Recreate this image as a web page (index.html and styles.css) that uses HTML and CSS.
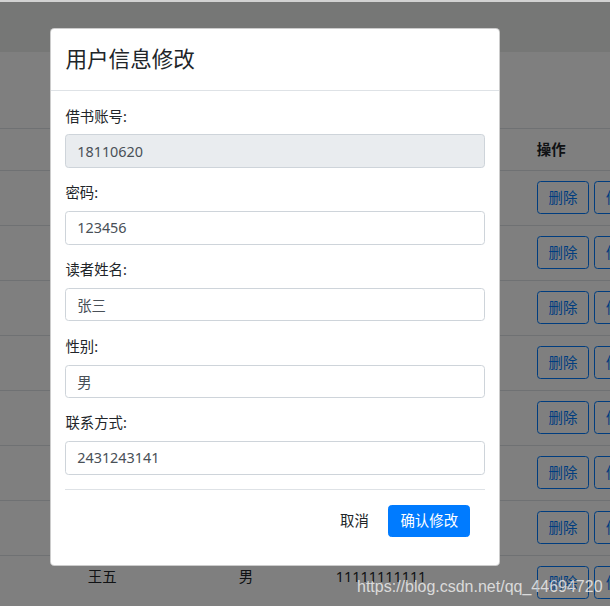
FILE: index.html
```html
<!DOCTYPE html>
<html lang="zh-CN">
<head>
<meta charset="utf-8">
<title>用户信息修改</title>
<link rel="stylesheet" href="styles.css">
</head>
<body>
<div class="chrome-strip"></div>
<nav class="navbar"></nav>
<main class="page">
  <table class="table">
    <colgroup>
      <col class="c-acc"><col class="c-name"><col class="c-sex"><col class="c-tel"><col class="c-op">
    </colgroup>
    <thead>
      <tr><th>借书账号</th><th>读者姓名</th><th>性别</th><th>联系方式</th><th>操作</th></tr>
    </thead>
    <tbody>
      <tr><td>18110620</td><td>张三</td><td>男</td><td>2431243141</td><td><button class="btn-o">删除</button><button class="btn-o">修改</button></td></tr>
      <tr><td>18110621</td><td>李四</td><td>女</td><td>13800000000</td><td><button class="btn-o">删除</button><button class="btn-o">修改</button></td></tr>
      <tr><td>18110622</td><td>赵六</td><td>男</td><td>13900000000</td><td><button class="btn-o">删除</button><button class="btn-o">修改</button></td></tr>
      <tr><td>18110623</td><td>孙七</td><td>女</td><td>13700000000</td><td><button class="btn-o">删除</button><button class="btn-o">修改</button></td></tr>
      <tr><td>18110624</td><td>周八</td><td>男</td><td>13600000000</td><td><button class="btn-o">删除</button><button class="btn-o">修改</button></td></tr>
      <tr><td>18110625</td><td>吴九</td><td>女</td><td>13500000000</td><td><button class="btn-o">删除</button><button class="btn-o">修改</button></td></tr>
      <tr><td>18110626</td><td>郑十</td><td>男</td><td>13400000000</td><td><button class="btn-o">删除</button><button class="btn-o">修改</button></td></tr>
      <tr><td>18110627</td><td>王五</td><td>男</td><td>11111111111</td><td><button class="btn-o">删除</button><button class="btn-o">修改</button></td></tr>
    </tbody>
  </table>
</main>

<div class="backdrop">
  <div class="modal">
    <div class="modal-header">
      <h4 class="modal-title">用户信息修改</h4>
    </div>
    <form class="modal-body">
      <div class="group">
        <label class="label">借书账号:</label>
        <input class="input" type="text" value="18110620" disabled>
      </div>
      <div class="group">
        <label class="label">密码:</label>
        <input class="input" type="text" value="123456">
      </div>
      <div class="group">
        <label class="label">读者姓名:</label>
        <input class="input" type="text" value="张三">
      </div>
      <div class="group">
        <label class="label">性别:</label>
        <input class="input" type="text" value="男">
      </div>
      <div class="group">
        <label class="label">联系方式:</label>
        <input class="input" type="text" value="2431243141">
      </div>
      <div class="footer">
        <button type="button" class="btn btn-cancel">取消</button>
        <button type="button" class="btn btn-primary">确认修改</button>
      </div>
    </form>
  </div>
</div>
<div class="watermark">https://blog.csdn.net/qq_44694720</div>
</body>
</html>
```
FILE: styles.css
```css
* { box-sizing: border-box; }
html, body {
  margin: 0;
  padding: 0;
  width: 610px;
  height: 606px;
  overflow: hidden;
}
body {
  font-family: "Noto Sans", "Noto Sans CJK SC", sans-serif;
  font-size: 14.4px;
  line-height: 21.6px;
  color: #212529;
  background: #ffffff;
  position: relative;
}
.chrome-strip {
  height: 2px;
  background: #d2d2d2;
}
.navbar {
  height: 50px;
  background: #eceeed;
}
.page {
  padding-top: 76px;
}
.table {
  border-collapse: collapse;
  table-layout: fixed;
  width: 805px;
  margin-left: -150px;
}
.c-acc { width: 227px; }
.c-name { width: 151px; }
.c-sex { width: 97px; }
.c-tel { width: 201px; }
.c-op { width: 129px; }
.table th {
  text-align: left;
  font-weight: 700;
  border-top: 1px solid #dee2e6;
  padding: 10px 10.8px 9.4px;
  vertical-align: top;
}
.table td {
  border-top: 1px solid #dee2e6;
  padding: 10.5px 10.8px;
  vertical-align: top;
  white-space: nowrap;
}
.btn-o {
  font: inherit;
  color: #007bff;
  background: transparent;
  border: 1px solid #007bff;
  border-radius: 3.6px;
  height: 33px;
  padding: 0 10.8px;
  margin-right: 5px;
  line-height: 21.6px;
}
.backdrop {
  position: absolute;
  left: 0;
  right: 0;
  top: 2px;
  bottom: 0;
  background: rgba(0, 0, 0, 0.5);
  padding: 26px 0 0 50px;
}
.modal {
  width: 450px;
  background: #ffffff;
  border: 1px solid rgba(0, 0, 0, 0.2);
  border-radius: 4.3px;
}
.modal-header {
  padding: 14.4px;
  border-bottom: 1px solid #dee2e6;
}
.modal-title {
  margin: 0;
  font-size: 21.6px;
  line-height: 32.4px;
  font-weight: 400;
  color: #212529;
}
.modal-body {
  margin: 0;
  padding: 14.4px;
}
.group {
  margin-bottom: 14.45px;
}
.label {
  display: block;
  line-height: 21.6px;
  margin-bottom: 7.2px;
}
.input {
  display: block;
  width: 100%;
  height: 33.5px;
  padding: 0 10.8px;
  font: inherit;
  color: #495057;
  background: #ffffff;
  border: 1px solid #ced4da;
  border-radius: 3.6px;
}
.input:disabled {
  background: #e9ecef;
  color: #495057;
  opacity: 1;
}
.footer {
  display: flex;
  justify-content: flex-end;
  gap: 7.2px;
  padding: 14.4px;
  border-top: 1px solid #dee2e6;
}
.btn {
  font: inherit;
  height: 32px;
  padding: 0 11.2px;
  line-height: 21.6px;
  border: 1px solid transparent;
  border-radius: 3.6px;
}
.btn-cancel {
  background: transparent;
  color: #212529;
}
.btn-primary {
  background: #007bff;
  border-color: #007bff;
  color: #ffffff;
}
.watermark {
  position: absolute;
  left: 357px;
  top: 577px;
  font-family: "Liberation Sans", Arial, sans-serif;
  font-size: 16px;
  line-height: 20px;
  color: rgba(255, 255, 255, 0.72);
  white-space: nowrap;
}
```
